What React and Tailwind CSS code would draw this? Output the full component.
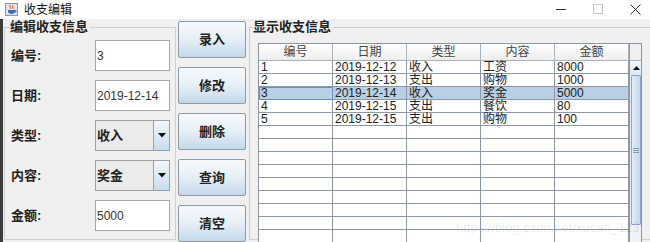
import React from "react";

const records = [
  ["1", "2019-12-12", "收入", "工资", "8000"],
  ["2", "2019-12-13", "支出", "购物", "1000"],
  ["3", "2019-12-14", "收入", "奖金", "5000"],
  ["4", "2019-12-15", "支出", "餐饮", "80"],
  ["5", "2019-12-15", "支出", "购物", "100"],
];

const headers = ["编号", "日期", "类型", "内容", "金额"];

const JavaIcon = () => (
  <svg width="13" height="13" viewBox="0 0 13 13">
    <rect x="0.5" y="0.5" width="12" height="12" fill="#dfe6ee" stroke="#8a97a5" />
    <path d="M5 2 C4 3.5 6.5 4 5.5 6 M7.5 2 C6.5 3.5 9 4 8 6" stroke="#e5731f" strokeWidth="1.1" fill="none" />
    <path d="M3 7 H10 V8.5 C10 10 8.5 11 6.5 11 C4.5 11 3 10 3 8.5 Z" fill="#3b6fb5" />
    <path d="M10 7.5 H11 V9 H10" stroke="#3b6fb5" fill="none" />
  </svg>
);

const TitleBar = () => (
  <div className="flex items-center h-[19px] bg-white">
    <div className="ml-[5px] flex items-center">
      <JavaIcon />
    </div>
    <span className="ml-[6px] text-[12px] leading-[14px] text-[#111]">收支编辑</span>
    <div className="ml-auto -mr-[4px] flex h-full">
      <div className="w-[37px] flex items-center justify-center">
        <svg width="11" height="11" viewBox="0 0 11 11">
          <path d="M0 5.5 H10" stroke="#333" strokeWidth="1" />
        </svg>
      </div>
      <div className="w-[37px] flex items-center justify-center">
        <svg width="11" height="11" viewBox="0 0 11 11">
          <rect x="0.5" y="0.5" width="9" height="9" fill="none" stroke="#c4c4c4" />
        </svg>
      </div>
      <div className="w-[37px] flex items-center justify-center">
        <svg width="11" height="11" viewBox="0 0 11 11">
          <path d="M0.5 0.5 L10.5 10.5 M10.5 0.5 L0.5 10.5" stroke="#333" strokeWidth="1" />
        </svg>
      </div>
    </div>
  </div>
);

const TextField = ({ value }) => (
  <div className="w-[75px] h-[31px] shrink-0 bg-white border border-[#a6a6a6] flex items-center pl-[1px] text-[12px] text-[#333]">
    {value}
  </div>
);

const Combo = ({ value }) => (
  <div className="w-[75px] h-[31px] shrink-0 bg-[#ebebeb] border border-[#a0a0a0] flex">
    <div className="flex-1 flex items-center pl-[1px] text-[13px] font-semibold text-[#222]">{value}</div>
    <div className="w-[16px] border-l border-[#a0a0a0] bg-linear-to-b from-[#f2f7fb] to-[#c9dcee] flex items-center justify-center">
      <svg width="8" height="5" viewBox="0 0 8 5">
        <path d="M0 0 H8 L4 4.5 Z" fill="#111" />
      </svg>
    </div>
  </div>
);

const FormRow = ({ label, children }) => (
  <div className="flex items-center h-[31px]">
    <span className="w-[84px] shrink-0 text-[13px] font-semibold text-[#222]">{label}</span>
    {children}
  </div>
);

const EditPanel = () => (
  <fieldset className="shrink-0 ml-[1px] w-[172px] h-[221px] border border-[#cfcfcf] pl-[6px] pb-[7px]">
    <legend className="text-[13px] leading-[16px] font-semibold text-[#222] -ml-[1px] pr-[2px]">编辑收支信息</legend>
    <div className="flex flex-col gap-[9px] pt-[5px]">
      <FormRow label="编号:">
        <TextField value="3" />
      </FormRow>
      <FormRow label="日期:">
        <TextField value="2019-12-14" />
      </FormRow>
      <FormRow label="类型:">
        <Combo value="收入" />
      </FormRow>
      <FormRow label="内容:">
        <Combo value="奖金" />
      </FormRow>
      <FormRow label="金额:">
        <TextField value="5000" />
      </FormRow>
    </div>
  </fieldset>
);

const ActionButton = ({ label }) => (
  <div className="h-[37px] w-[68px] border border-[#8d9aa7] rounded-[2px] bg-linear-to-b from-[#f6f9fc] via-[#e6eff7] to-[#c4d8ea] flex items-center justify-center text-[13px] font-semibold text-[#222]">
    {label}
  </div>
);

const ButtonColumn = () => (
  <div className="shrink-0 ml-[2px] pt-[2px] flex flex-col gap-[9px]">
    {["录入", "修改", "删除", "查询", "清空"].map((b) => (
      <ActionButton key={b} label={b} />
    ))}
  </div>
);

const RecordTable = () => {
  const blanks = Array.from({ length: 9 });
  return (
    <div className="ml-[5px] mt-[8px] flex border border-[#8a97a4] w-[384px] h-[200px] overflow-hidden">
      <div className="flex flex-col w-[370px] shrink-0 bg-white">
        <div className="flex h-[17px] shrink-0">
          {headers.map((h) => (
            <div
              key={h}
              className="w-[74px] shrink-0 border-r border-b border-[#a9b4be] bg-linear-to-b from-white to-[#eeeeee] flex items-center justify-center text-[12px] text-[#444]"
            >
              {h}
            </div>
          ))}
        </div>
        {records.map((r, i) => (
          <div key={r[0]} className={`flex h-[13px] shrink-0 ${i === 2 ? "bg-[#b8cfe5]" : "bg-white"}`}>
            {r.map((c, j) => (
              <div
                key={j}
                className={`w-[74px] shrink-0 border-r border-b border-[#8e9aa6] pl-[2px] text-[12px] leading-[12px] text-[#222] whitespace-nowrap ${
                  i === 2 && j === 0 ? "outline outline-1 -outline-offset-1 outline-[#6c8fb6]" : ""
                }`}
              >
                {c}
              </div>
            ))}
          </div>
        ))}
        {blanks.map((_, i) => (
          <div key={i} className="flex h-[13px] shrink-0">
            {headers.map((h) => (
              <div key={h} className="w-[74px] shrink-0 border-r border-b border-[#8e9aa6]" />
            ))}
          </div>
        ))}
      </div>
      <div className="w-[13px] shrink-0 flex flex-col bg-[#eef2f6] border-l border-[#8a97a4]">
        <div className="h-[17px] shrink-0 bg-[#f0f0f0] border-b border-[#a9b4be]" />
        <div className="h-[14px] shrink-0 flex items-center justify-center bg-linear-to-b from-[#f3f7fb] to-[#dbe7f2]">
          <svg width="7" height="4" viewBox="0 0 7 4">
            <path d="M0 4 H7 L3.5 0 Z" fill="#111" />
          </svg>
        </div>
        <div className="h-[150px] shrink-0 mx-[1px] border border-[#8aa7c6] rounded-[1px] bg-linear-to-r from-[#e4eef8] via-[#d2e2f2] to-[#c4d8ec] flex items-center justify-center">
          <div className="flex flex-col gap-[1px]">
            <div className="w-[6px] h-px bg-[#7f9cbd]" />
            <div className="w-[6px] h-px bg-[#7f9cbd]" />
            <div className="w-[6px] h-px bg-[#7f9cbd]" />
          </div>
        </div>
      </div>
    </div>
  );
};

const DisplayPanel = () => (
  <fieldset className="shrink-0 ml-[3px] w-[420px] h-[221px] border border-[#cfcfcf] pl-[3px]">
    <legend className="text-[13px] leading-[16px] font-semibold text-[#222] pr-[2px]">显示收支信息</legend>
    <RecordTable />
  </fieldset>
);

export default function App() {
  return (
    <div className="relative w-[650px] h-[242px] overflow-hidden bg-[#f0f0f0] font-['Liberation_Sans','Noto_Sans_CJK_SC',sans-serif]">
      <TitleBar />
      <div className="flex">
        <div className="w-[3px] shrink-0 h-[223px] bg-[#3c3c3c]" />
        <EditPanel />
        <ButtonColumn />
        <DisplayPanel />
      </div>
      <div className="absolute left-[456px] top-[218px] text-[13px] text-[rgba(0,0,0,0.09)] whitespace-nowrap pointer-events-none">
        https://blog.csdn.net/xucan_123
      </div>
    </div>
  );
}
